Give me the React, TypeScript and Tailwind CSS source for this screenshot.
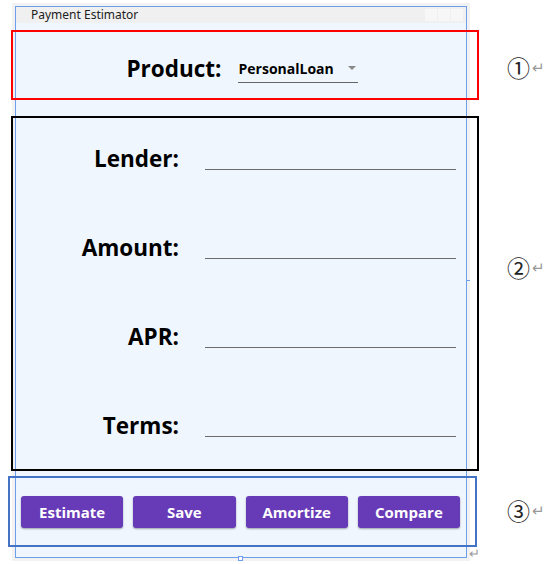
const fields = ["Lender:", "Amount:", "APR:", "Terms:"];
const actions = ["Estimate", "Save", "Amortize", "Compare"];

function Callout({ n, top }: { n: string; top: number }) {
  return (
    <div
      className="absolute left-[507px] flex items-center gap-[2px] leading-none text-[#222]"
      style={{ top }}
    >
      <span className="text-[23px] font-['Noto_Sans_CJK_KR',sans-serif]">{n}</span>
      <span className="text-[15px] text-[#999]">↵</span>
    </div>
  );
}

export default function App() {
  return (
    <div className="relative w-[547px] h-[564px] bg-white font-['Open_Sans',sans-serif] overflow-hidden">
      <div className="ml-[12px] pt-[3px]">
        <div className="w-[458px] h-[558px] bg-[#f2f2f2] p-[3px]">
          <div className="flex flex-col h-full border border-[#6d9eeb] bg-[#eff6fe]">
            <div className="flex items-center justify-between h-[16px] bg-[#f0f0f0] pl-[15px] pr-[3px]">
              <span className="text-[12px] leading-none text-[#222] font-['Noto_Sans',sans-serif]">
                Payment Estimator
              </span>
              <div className="flex gap-[1px]">
                <div className="w-[12px] h-[12px] bg-[#f7f7f7]" />
                <div className="w-[12px] h-[12px] bg-[#f7f7f7]" />
                <div className="w-[12px] h-[12px] bg-[#f7f7f7]" />
              </div>
            </div>

            <div className="flex items-center justify-center gap-[16px] h-[91px] pl-[2px]">
              <span className="text-[22.5px] font-bold text-black">Product:</span>
              <div className="flex items-center justify-between w-[120px] h-[28px] border-b border-[#666] pl-[1px]">
                <span className="text-[14px] font-bold text-black">PersonalLoan</span>
                <svg width="8" height="5" viewBox="0 0 8 5" className="mr-[2px]">
                  <path d="M0 0h8L4 4z" fill="#888" />
                </svg>
              </div>
            </div>

            {fields.map((f) => (
              <div key={f} className="grid grid-cols-[163px_1fr] gap-[26px] items-center h-[89px] pr-[10px]">
                <span className="text-right text-[22.5px] font-bold text-black">{f}</span>
                <div className="h-[23px] border-b border-[#6b6b6b]" />
              </div>
            ))}

            <div className="grid grid-cols-4 gap-[10px] pl-[5px] pr-[6px] pt-[26px]">
              {actions.map((a) => (
                <button
                  key={a}
                  className="h-[32px] rounded-[3px] bg-[#673ab7] text-white text-[15px] font-bold shadow-[0_1px_2px_rgba(0,0,0,0.35)]"
                >
                  {a}
                </button>
              ))}
            </div>
          </div>
        </div>
      </div>

      <div className="absolute left-[11px] top-[30px] w-[468px] h-[70px] border-2 border-[#ff0000]" />
      <div className="absolute left-[11px] top-[116px] w-[468px] h-[355px] border-2 border-black" />
      <div className="absolute left-[8px] top-[476px] w-[469px] h-[71px] border-2 border-[#4472c4]" />

      <div className="absolute left-[238px] top-[556px] w-[5px] h-[5px] border border-[#6d9eeb] bg-white" />
      <div className="absolute left-[466px] top-[280px] w-[4px] h-[1px] bg-[#6d9eeb]" />
      <span className="absolute left-[469px] top-[547px] text-[13px] text-[#999] leading-none">↵</span>

      <Callout n="①" top={56} />
      <Callout n="②" top={256} />
      <Callout n="③" top={499} />
    </div>
  );
}
